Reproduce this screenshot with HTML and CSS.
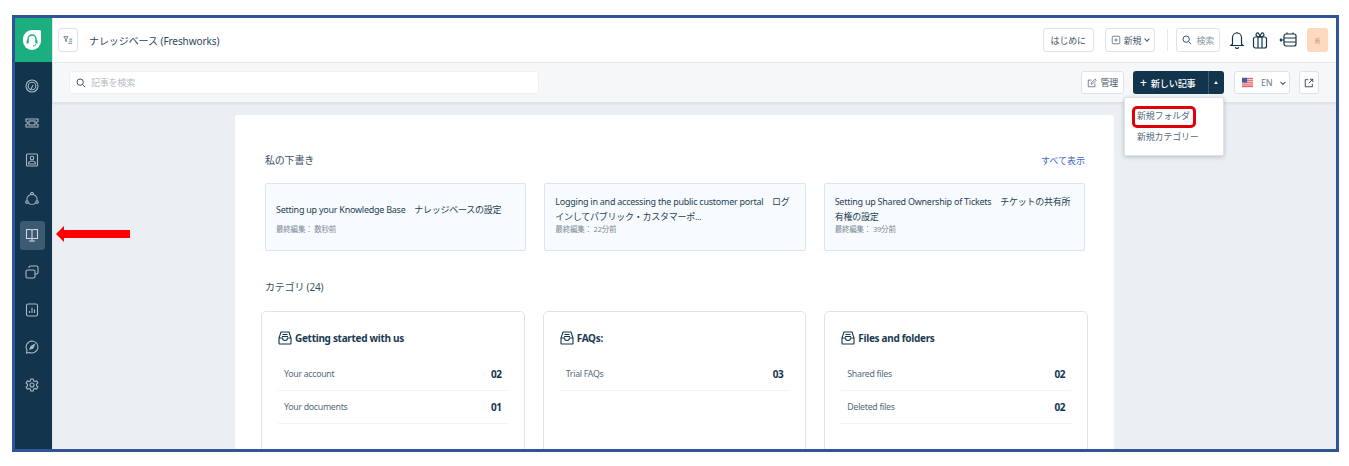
FILE: index.html
```html
<!DOCTYPE html>
<html lang="ja">
<head>
  <meta charset="UTF-8">
  <title>ナレッジベース (Freshworks)</title>
  <link rel="stylesheet" href="styles.css">
</head>
<body>
  <div class="frame">
    <nav class="sidebar">
      <div class="logo">
        <svg width="18" height="20" viewBox="0 0 18 20"><path d="M9 0h7.500a1.500 1.500 0 0 1 1.500 1.500V11a9 9 0 0 1-9 9h0a9 9 0 0 1-9-9V9a9 9 0 0 1 9-9z" fill="#fff"/><path d="M5 12V9a4 4 0 0 1 8 0v3" fill="none" stroke="#1bae7f" stroke-width="1.400"/><path d="M4.500 10.500v3M13.500 10.500v3" fill="none" stroke="#1bae7f" stroke-width="2"/><path d="M13 14a3 3 0 0 1-3 2" fill="none" stroke="#1bae7f" stroke-width="1"/></svg>
      </div>
      <div class="nav-item">
        <svg class="nav-icon" viewBox="0 0 14 14"><circle cx="7" cy="7" r="6"/><circle cx="7" cy="7" r="3.800"/><path d="M5.500 11l2.500-5"/></svg>
      </div>
      <div class="nav-item">
        <svg class="nav-icon" viewBox="0 0 14 14"><path d="M1 3h12v2.500a1.500 1.500 0 0 0 0 3V11H1V8.500a1.500 1.500 0 0 0 0-3z"/><rect x="4" y="5" width="6" height="4"/></svg>
      </div>
      <div class="nav-item">
        <svg class="nav-icon" viewBox="0 0 14 14"><rect x="1.500" y="1" width="11" height="12" rx="1"/><circle cx="7" cy="5" r="1.800"/><path d="M3.500 11c0-4 7-4 7 0z"/></svg>
      </div>
      <div class="nav-item">
        <svg class="nav-icon" viewBox="0 0 14 14"><circle cx="7" cy="2.500" r="1.300"/><circle cx="2" cy="11" r="1.300"/><circle cx="12" cy="11" r="1.300"/><path d="M5.800 3.500A5.500 5.500 0 0 0 2 9.700M8.200 3.500A5.500 5.500 0 0 1 12 9.700M3.300 11.800a5.500 5.500 0 0 0 7.400 0"/></svg>
      </div>
      <div class="nav-item active">
        <svg class="nav-icon" viewBox="0 0 14 14"><path d="M1.500 1.500h4A1.500 1.500 0 0 1 7 3v7.500H1.500zM12.500 1.500h-4A1.500 1.500 0 0 0 7 3v7.500h5.500zM4 13h6M7 10.500V13"/></svg>
      </div>
      <div class="nav-item">
        <svg class="nav-icon" viewBox="0 0 14 14"><rect x="1" y="5" width="9" height="8" rx="1.500"/><path d="M4 3V2.500A1.500 1.500 0 0 1 5.500 1h6A1.500 1.500 0 0 1 13 2.500v5A1.500 1.500 0 0 1 11.500 9H10"/></svg>
      </div>
      <div class="nav-item">
        <svg class="nav-icon" viewBox="0 0 14 14"><rect x="1.500" y="1" width="11" height="12" rx="1.500"/><path d="M4.500 10V8M7 10V4.500M9.500 10V6.500"/></svg>
      </div>
      <div class="nav-item">
        <svg class="nav-icon" viewBox="0 0 14 14"><path d="M7 1a6 6 0 1 1-2.500 11.500L1.500 13l.6-2.800A6 6 0 0 1 7 1z"/><path d="M5 9l1-2.500L9.500 4.500 8 8z" fill="#a9b8c4"/></svg>
      </div>
      <div class="nav-item">
        <svg class="nav-icon" viewBox="0 0 14 14"><circle cx="7" cy="7" r="2"/><path d="M5.800 1h2.400l.4 1.800 1.300.7 1.800-.6 1.200 2.100-1.400 1.200v1.500l1.400 1.200-1.200 2.100-1.800-.6-1.300.7L8.200 13H5.800l-.4-1.800-1.300-.7-1.800.6L1.100 9l1.400-1.200V6.300L1.100 5.100l1.200-2.100 1.800.6 1.300-.7z"/></svg>
      </div>
    </nav>

    <div class="main">
      <header class="topbar">
        <div class="title-group">
          <button class="btn square-btn">
            <svg class="btn-icon" viewBox="0 0 12 12"><path d="M1 2h5L4 5v3L3 7V5zM7.500 5H11M7.500 7.500H11M6.500 10H11"/></svg>
          </button>
          <span class="page-title">ナレッジベース (Freshworks)</span>
        </div>
        <div class="top-actions">
          <button class="btn start-btn">はじめに</button>
          <button class="btn tight-btn">
            <svg class="btn-icon" viewBox="0 0 12 12"><rect x="1.500" y="1.500" width="9" height="9" rx="1"/><path d="M6 4v4M4 6h4"/></svg>
            新規 <span class="caret"></span>
          </button>
          <span class="divider"></span>
          <button class="btn">
            <svg class="btn-icon dark" viewBox="0 0 12 12"><circle cx="5" cy="5" r="3.800"/><path d="M8 8l3 3"/></svg>
            <span class="muted">検索</span>
          </button>
          <svg class="top-icon bell" viewBox="0 0 16 18"><path d="M3.500 13V6.500a4.500 4.500 0 0 1 9 0V13l1.500 1.500H2zM6.500 16a1.500 1.500 0 0 0 3 0M8 2V1"/></svg>
          <svg class="top-icon gift" viewBox="0 0 16 18"><rect x="1.500" y="6" width="13" height="11" rx="2"/><path d="M6 6v11M10 6v11M8 6C5 6 3 4.500 4.500 2.500S8 4 8 6c0-2 2-5.500 3.500-3.500S11 6 8 6z"/></svg>
          <svg class="top-icon chat" viewBox="0 0 18 18"><rect x="5" y="3" width="12" height="12" rx="2"/><path d="M5 7h12M5 11h12M8 3V1.500M14 3V1.500M1 9h4M1 9l1.500-1.500M1 9l1.500 1.500"/></svg>
          <span class="avatar">希</span>
        </div>
      </header>

      <div class="subbar">
        <div class="search-box">
          <svg class="btn-icon dark" viewBox="0 0 12 12"><circle cx="5" cy="5" r="3.800"/><path d="M8 8l3 3"/></svg>
          <span class="placeholder">記事を検索</span>
        </div>
        <div class="sub-actions">
          <button class="btn tight-btn">
            <svg class="btn-icon" viewBox="0 0 12 12"><path d="M9.500 6.500v4h-8v-8h4M5 7.500l.4-1.900L9.800 1.200l1.400 1.400L6.800 7z"/></svg>
            管理
          </button>
          <div class="split-btn">
            <span class="split-main"><b class="plus">+</b> 新しい記事</span>
            <span class="split-caret"></span>
          </div>
          <button class="btn lang-btn">
            <svg width="13" height="11" viewBox="0 0 13 11"><rect width="13" height="11" fill="#e8606a"/><path d="M0 2h13M0 4.200h13M0 6.400h13M0 8.600h13" stroke="#f6dfe2" stroke-width="1"/><rect width="6" height="5.500" fill="#3f5ea8"/></svg>
            <span class="lang-label">EN</span> <span class="caret"></span>
          </button>
          <button class="btn square-btn">
            <svg class="btn-icon dark" viewBox="0 0 12 12"><path d="M5 2H1.500v8.500H10V7M7 1.500h3.500V5M10.500 1.500L5.500 6.500"/></svg>
          </button>
        </div>
      </div>

      <div class="content">
        <section class="panel">
          <div class="section-head">
            <h2 class="section-title">私の下書き</h2>
            <a class="see-all">すべて表示</a>
          </div>
          <div class="drafts">
            <div class="draft">
              <p class="draft-title">Setting up your Knowledge Base　ナレッジベースの設定</p>
              <p class="draft-meta">最終編集： 数秒前</p>
            </div>
            <div class="draft">
              <p class="draft-title">Logging in and accessing the public customer portal　ログインしてパブリック・カスタマーポ...</p>
              <p class="draft-meta">最終編集： 22分前</p>
            </div>
            <div class="draft">
              <p class="draft-title">Setting up Shared Ownership of Tickets　チケットの共有所有権の設定</p>
              <p class="draft-meta">最終編集： 39分前</p>
            </div>
          </div>
          <h2 class="section-title cat-title">カテゴリ (24)</h2>
          <div class="categories">
            <div class="category">
              <h3 class="cat-head">
                <svg class="cat-icon" viewBox="0 0 14 14"><path d="M3 1h8l2 6v5.500a.5.5 0 0 1-.5.5h-11a.5.5 0 0 1-.5-.5V7zM1 7h3.500a2.500 2.500 0 0 0 5 0H13M4.500 3.500h5M4 5.500h6"/></svg>
                Getting started with us
              </h3>
              <div class="cat-row"><span>Your account</span><b>02</b></div>
              <div class="cat-row"><span>Your documents</span><b>01</b></div>
            </div>
            <div class="category">
              <h3 class="cat-head">
                <svg class="cat-icon" viewBox="0 0 14 14"><path d="M3 1h8l2 6v5.500a.5.5 0 0 1-.5.5h-11a.5.5 0 0 1-.5-.5V7zM1 7h3.500a2.500 2.500 0 0 0 5 0H13M4.500 3.500h5M4 5.500h6"/></svg>
                FAQs:
              </h3>
              <div class="cat-row"><span>Trial FAQs</span><b>03</b></div>
            </div>
            <div class="category">
              <h3 class="cat-head">
                <svg class="cat-icon" viewBox="0 0 14 14"><path d="M3 1h8l2 6v5.500a.5.5 0 0 1-.5.5h-11a.5.5 0 0 1-.5-.5V7zM1 7h3.500a2.500 2.500 0 0 0 5 0H13M4.500 3.500h5M4 5.500h6"/></svg>
                Files and folders
              </h3>
              <div class="cat-row"><span>Shared files</span><b>02</b></div>
              <div class="cat-row"><span>Deleted files</span><b>02</b></div>
            </div>
          </div>
        </section>
      </div>

      <div class="dropdown">
        <div class="menu-item highlighted">新規フォルダ</div>
        <div class="menu-item">新規カテゴリー</div>
      </div>
    </div>

    <svg class="red-arrow" width="74" height="16" viewBox="0 0 74 16"><path d="M0 8L8 0v4h66v8H8v4z" fill="#f00"/></svg>
  </div>
</body>
</html>
```

FILE: styles.css
```css
* { box-sizing: border-box; }
html, body { height: 100%; }
body { margin: 0; background: #fff; color: #12344d; font-family: "Noto Sans", "Noto Sans CJK JP", sans-serif; font-size: 9px; letter-spacing: -0.2px; overflow: hidden; }
h2, h3, p { margin: 0; }
button { font: inherit; color: inherit; letter-spacing: inherit; }

.frame { position: relative; display: flex; width: 1327px; height: 437px; margin: 15px 0 0 12px; border: 3px solid #2f5597; overflow: hidden; }

.sidebar { width: 38px; flex: none; padding-right: 3px; background: #12344d; border-right: 1px solid #dfe4ea; display: flex; flex-direction: column; align-items: center; }
.logo { width: 37px; height: 44px; margin-bottom: 9px; padding-right: 3px; background: #1bae7f; display: flex; align-items: center; justify-content: center; align-self: flex-start; flex: none; }
.nav-item { width: 25px; height: 29px; margin-bottom: 8.400px; border-radius: 3px; display: flex; align-items: center; justify-content: center; flex: none; }
.nav-item.active { background: #3c5a72; }
.nav-item.active .nav-icon { stroke: #cfd8df; }
.nav-icon { width: 14px; height: 14px; fill: none; stroke: #a9b8c4; stroke-width: 1.100; }

.main { position: relative; flex: 1; min-width: 0; display: flex; flex-direction: column; background: #ebeef3; }

.topbar { height: 45px; flex: none; padding: 0 8px 0 5px; background: #fff; border-bottom: 1px solid #e6eaef; display: flex; align-items: center; justify-content: space-between; }
.topbar .btn { height: 24px; }
.title-group { display: flex; align-items: center; gap: 11px; }
.page-title { font-size: 10px; letter-spacing: -0.08px; color: #30485c; }
.top-actions { display: flex; align-items: center; gap: 10px; }
.top-icon { width: 16px; height: 18px; fill: none; stroke: #12344d; stroke-width: 1.200; }
.top-icon.bell { margin-left: -1px; }
.top-icon.gift { margin: 0 1px 0 -3px; }
.top-icon.chat { width: 18px; }
.divider { width: 1px; height: 22px; margin: 0 -2px 0 2px; background: #e6eaef; }
.avatar { width: 21px; height: 24px; border-radius: 3px; background: #fdd9c0; color: #d59a78; font-size: 6px; display: flex; align-items: center; justify-content: center; }

.btn { height: 23px; padding: 0 5px; background: #fff; border: 1px solid #dde3e9; border-radius: 3px; color: #475867; display: inline-flex; align-items: center; gap: 4px; }
.start-btn { padding: 0 7px; margin-right: 1px; }
.tight-btn { gap: 3px; }
.square-btn { width: 20px; padding: 0; justify-content: center; }
.btn-icon { width: 10px; height: 10px; fill: none; stroke: #5b6d7c; stroke-width: 1; flex: none; }
.btn-icon.dark { stroke: #12344d; }
.caret { width: 4px; height: 4px; margin: -2px 0 0 1px; border-right: 1px solid #475867; border-bottom: 1px solid #475867; transform: rotate(45deg); }
.muted { color: #8a98a4; }

.subbar { height: 40px; flex: none; padding: 0 17px 0 16px; background: #f5f7f9; border-bottom: 1px solid #dfe4ea; box-shadow: 0 1px 2px rgba(18, 52, 77, 0.08); display: flex; align-items: center; justify-content: space-between; }
.search-box { width: 470px; height: 23px; padding: 0 6px; background: #fff; border: 1px solid #eef1f4; border-radius: 3px; display: flex; align-items: center; gap: 5px; }
.placeholder { color: #b4bec7; }
.sub-actions { display: flex; align-items: center; gap: 9px; }
.split-btn { height: 23px; margin-right: 1px; display: flex; color: #fff; font-size: 9.200px; border-radius: 3px; overflow: hidden; background: #12344d; }
.split-main { width: 75px; padding-left: 7px; display: flex; align-items: center; gap: 4px; font-weight: 500; white-space: nowrap; }
.plus { font-size: 12px; font-weight: 500; line-height: 1; }
.split-caret { width: 16px; border-left: 1px solid #3c5a72; position: relative; }
.split-caret::after { content: ""; position: absolute; left: 5px; top: 10px; border: 2.500px solid transparent; border-top: 0; border-bottom: 3px solid #fff; }
.lang-btn { width: 56px; padding: 0 4px 0 7px; gap: 8px; }
.lang-label { color: #6f7e8a; }

.content { flex: 1; min-height: 0; padding: 12px 222px 0 182px; }
.panel { height: 400px; padding: 36px 29px 0 30px; background: #fff; border-radius: 3px; }
.section-head { display: flex; align-items: center; justify-content: space-between; }
.section-title { font-size: 10px; line-height: 18px; font-weight: 400; color: #3d5063; }
.see-all { letter-spacing: 0; color: #3f68c4; }
.drafts { display: flex; gap: 18px; margin-top: 14px; }
.draft { flex: 1; height: 68px; padding: 10px 10px 0; background: #f7fbfe; border: 1px solid #dce6f0; border-radius: 2px; }
.draft-title { min-height: 30px; line-height: 15px; letter-spacing: -0.25px; color: #263f54; display: flex; align-items: center; }
.draft-meta { font-size: 7.500px; line-height: 11px; color: #7d8a96; }
.cat-title { margin-top: 27px; }
.categories { display: flex; gap: 18px; margin: 15px -3px 0 -4px; }
.category { flex: 1; height: 200px; padding: 16px 16px 0; background: #fff; border: 1px solid #dfe4ec; border-radius: 5px; }
.cat-head { font-size: 10px; line-height: 20px; font-weight: 700; letter-spacing: -0.3px; color: #1b3a52; display: flex; align-items: center; gap: 3px; }
.cat-icon { width: 14px; height: 14px; fill: none; stroke: #12344d; stroke-width: 1.100; }
.cat-row { height: 33.500px; padding: 1px 6px 0; border-bottom: 1px solid #f1f3f6; display: flex; align-items: center; justify-content: space-between; color: #566a7b; font-size: 8.800px; letter-spacing: -0.3px; }
.cat-row b { color: #12344d; font-size: 10px; letter-spacing: -0.4px; }
.cat-head + .cat-row { margin-top: 9px; }

.dropdown { position: absolute; left: 1071px; top: 79px; width: 100px; height: 59px; padding: 8px 7px; background: #fff; border: 1px solid #dfe3e8; border-radius: 2px; box-shadow: 0 1px 4px rgba(18, 52, 77, 0.25); color: #566a7b; }
.menu-item { margin-top: 1px; padding: 0 5px; line-height: 16px; white-space: nowrap; }
.menu-item.highlighted { width: 64px; height: 22px; margin-top: 0; padding: 0 2px; line-height: 14px; border: 3px solid #e0000a; border-radius: 5px; }

.red-arrow { position: absolute; left: 41px; top: 208px; }
```
